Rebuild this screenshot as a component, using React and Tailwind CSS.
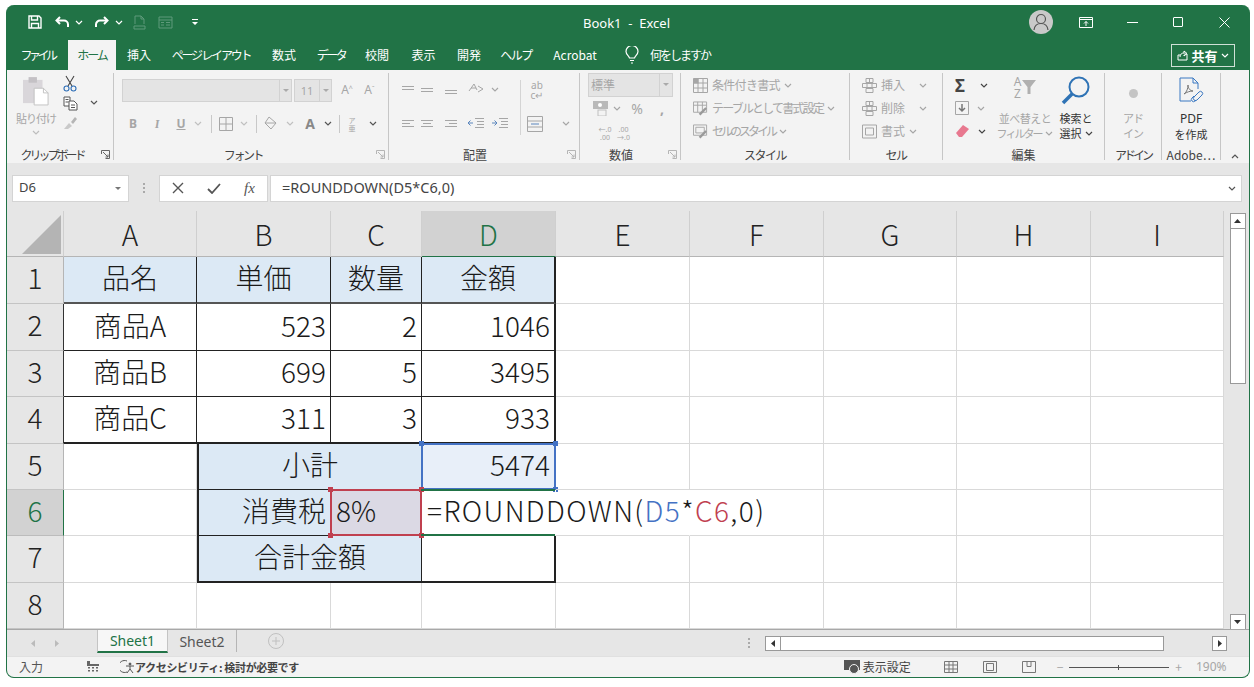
import React from "react";

const JP = "font-['Noto_Sans_CJK_JP','Noto_Sans',sans-serif]";
const UI = "font-['Noto_Sans','Noto_Sans_CJK_JP',sans-serif]";

function Chev({ c = "#a6a6a6", up = false }) {
  return (
    <svg width="8" height="5" viewBox="0 0 8 5" fill="none" stroke={c} strokeWidth="1.2" className="shrink-0">
      <path d={up ? "M1 4l3-3 3 3" : "M1 1l3 3 3-3"} />
    </svg>
  );
}
function Slot({ w, children }) {
  return <div className={`${w} flex items-center justify-center shrink-0 h-full`}>{children}</div>;
}
function VSep() {
  return <div className="w-px h-[18px] bg-[#c8c8c8]" />;
}
function Launcher({ dark }) {
  const c = dark ? "#666" : "#b5b5b5";
  return (
    <svg width="9" height="9" viewBox="0 0 9 9" fill="none" stroke={c} strokeWidth="1">
      <path d="M.5 4V.5H8.5V8.5H4.5" />
      <path d="M2 2l5 5M7 4.5V7H4.5" />
    </svg>
  );
}
function Lines({ v = [0, 3, 6], widths = [12, 12, 12], align = "c", c = "#a6a6a6" }) {
  return (
    <svg width="14" height="10" viewBox="0 0 14 10" stroke={c} strokeWidth="1">
      {v.map((y, i) => {
        const w = widths[i];
        const x = align === "l" ? 1 : align === "r" ? 13 - w : 7 - w / 2;
        return <path key={i} d={`M${x} ${y + 1.5}h${w}`} />;
      })}
    </svg>
  );
}
function Group({ w, label, dark = true, launcher, lx = "", children, sep = true }) {
  return (
    <div className={`${w} h-full shrink-0 flex`}>
      <div className="flex-1 min-w-0 flex flex-col">
        <div className="h-[77px] pt-[2px]">{children}</div>
        <div className="h-[16px] relative flex items-center justify-center">
          <span className={`${JP} text-[12px] leading-none text-[#444] whitespace-nowrap ${lx}`}>{label}</span>
          {launcher && (
            <span className="absolute right-[3px] top-[3px]">
              <Launcher dark={dark} />
            </span>
          )}
        </div>
      </div>
      {sep && <div className="w-px h-[87px] mt-[3px] bg-[#c6c6c6]" />}
    </div>
  );
}

function TitleBar() {
  const G = "#ffffff";
  return (
    <div className="h-[35px] flex items-center text-white relative">
      <Slot w="w-[14px]" />
      <Slot w="w-[28px]">
        <svg width="14" height="14" viewBox="0 0 14 14" fill="none" stroke={G} strokeWidth="1.4">
          <path d="M1 1h10l2 2v10H1z" />
          <path d="M3.5 1v4h6V1M3.5 13V8.5h7V13" />
        </svg>
      </Slot>
      <Slot w="w-[28px]">
        <svg width="16" height="12" viewBox="0 0 16 12" fill="none" stroke={G} strokeWidth="2">
          <path d="M5 1L1.5 4.5 5 8" />
          <path d="M2 4.5h7a4 4 0 0 1 4 4V11" />
        </svg>
      </Slot>
      <Slot w="w-[4px]"><Chev c="#fff" /></Slot>
      <Slot w="w-[4px]" />
      <Slot w="w-[32px]">
        <svg width="16" height="12" viewBox="0 0 16 12" fill="none" stroke={G} strokeWidth="2">
          <path d="M11 1l3.5 3.5L11 8" />
          <path d="M14 4.5H7a4 4 0 0 0-4 4V11" />
        </svg>
      </Slot>
      <Slot w="w-[4px]"><Chev c="#fff" /></Slot>
      <Slot w="w-[9px]" />
      <Slot w="w-[18px]">
        <svg width="13" height="15" viewBox="0 0 13 15" fill="none" stroke="#5f9a7b" strokeWidth="1">
          <path d="M2 9V1h6l3 3v5M8 1v3h3M1 11h11v3H1z" />
        </svg>
      </Slot>
      <Slot w="w-[4px]" />
      <Slot w="w-[26px]">
        <svg width="15" height="13" viewBox="0 0 15 13" fill="none" stroke="#5f9a7b" strokeWidth="1">
          <path d="M1 1h13v11H1zM1 4h13M3 6.5h3M8 6.5h4M3 9h3M8 9h4" />
        </svg>
      </Slot>
      <Slot w="w-[6px]" />
      <Slot w="w-[22px]">
        <svg width="6" height="6" viewBox="0 0 6 6" fill="#fff">
          <path d="M0 0h6v1H0zM0 3h6L3 6z" />
        </svg>
      </Slot>
      <div className="flex-1 pl-[377px] flex pt-[2px]">
        <span className={`${UI} text-[13px] whitespace-pre`}>{"Book1  -  Excel"}</span>
      </div>
      <div className="w-[24px] h-[24px] rounded-full bg-[#c9c9c9] flex items-center justify-center mr-[10px]">
        <svg width="16" height="18" viewBox="0 0 16 18" fill="none" stroke="#555" strokeWidth="1.2">
          <circle cx="8" cy="6" r="4.5" />
          <path d="M1 17c.5-4 3-6.500 7-6.500S14.500 13 15 17" />
        </svg>
      </div>
      <Slot w="w-[46px]">
        <svg width="14" height="11" viewBox="0 0 14 11" fill="none" stroke="#fff" strokeWidth="1">
          <path d="M.5.500h13v10H.500zM.5 2.500h13" />
          <path d="M7 9V4.500M5 6.500l2-2 2 2" />
        </svg>
      </Slot>
      <Slot w="w-[46px]"><div className="w-[11px] h-px bg-white" /></Slot>
      <Slot w="w-[46px]"><div className="w-[10px] h-[10px] border border-white rounded-[1px]" /></Slot>
      <Slot w="w-[46px]">
        <svg width="11" height="11" viewBox="0 0 11 11" stroke="#fff" strokeWidth="1"><path d="M.5.500l10 10M10.500.500l-10 10" /></svg>
      </Slot>
      <div className="w-[2px] shrink-0" />
    </div>
  );
}

function TabsRow() {
  const tabs = [
    ["ファイル", "w-[61px] tracking-[-3.5px]"],
    ["ホーム", "w-[48px] tracking-[-2px]", true],
    ["挿入", "w-[46px]"],
    ["ページ レイアウト", "w-[98px] tracking-[-2.2px]"],
    ["数式", "w-[48px]"],
    ["データ", "w-[46px] tracking-[-2.5px]"],
    ["校閲", "w-[46px]"],
    ["表示", "w-[47px]"],
    ["開発", "w-[44px]"],
    ["ヘルプ", "w-[50px] tracking-[-1.5px]"],
    ["Acrobat", "w-[68px]"],
  ];
  return (
    <div className={`h-[30px] flex items-stretch text-white ${JP} text-[12px]`}>
      {tabs.map(([t, w, act]) => (
        <div key={t} className={`${w} shrink-0 flex items-center justify-center whitespace-nowrap ${act ? "bg-[#f3f3f3] text-[#217346]" : ""}`}>
          {t}
        </div>
      ))}
      <div className="flex items-center pl-[16px] gap-[11px]">
        <svg width="14" height="18" viewBox="0 0 14 18" fill="none" stroke="#fff" strokeWidth="1.200">
          <path d="M4.500 12C4 10 1 8.500 1 5.500a6 6 0 0 1 12 0C13 8.500 10 10 9.500 12zM5 14.500h4M6 17h2" />
        </svg>
        <span className="whitespace-nowrap tracking-[-2px]">何をしますか</span>
      </div>
      <div className="flex-1" />
      <div className="self-start mt-[4px] mr-[14px] w-[64px] h-[23px] border border-[#cfe0d6] flex items-center justify-center gap-[3px]">
        <svg width="11" height="11" viewBox="0 0 11 11" fill="none" stroke="#fff" strokeWidth="1">
          <path d="M1 5v5h9V4H7M1 5l2-0M3 7c0-3 2-4 4-4V1l3 2.500L7 6V5" />
        </svg>
        <span className="font-bold text-[13px] leading-none">共有</span>
        <Chev c="#fff" />
      </div>
    </div>
  );
}

const GREY = "text-[#a6a6a6]";

function Clipboard() {
  return (
    <div className="flex h-full pl-[6px]">
      <div className="w-[46px] flex flex-col items-center pt-[4px]">
        <svg width="26" height="31" viewBox="0 0 28 31">
          <rect x="0" y="3" width="21" height="25" fill="#d9d6da" />
          <rect x="6" y="0" width="9" height="6" fill="#c4c1c5" />
          <path d="M12 12h10l5 5v13H12z" fill="#fff" stroke="#c0c0c0" />
          <path d="M22 12v5h5" fill="none" stroke="#c0c0c0" />
        </svg>
        <span className={`${JP} text-[11px] leading-none mt-[6px] tracking-[-1px] ${GREY} whitespace-nowrap`}>貼り付け</span>
        <div className="mt-[6px]"><Chev c="#bdbdbd" /></div>
      </div>
      <div className="flex flex-col items-center w-[22px] pt-[3px] gap-[4px]">
        <svg width="14" height="17" viewBox="0 0 14 17" fill="none" stroke="#444" strokeWidth="1.100">
          <path d="M3 1l6 10M11 1L5 11" />
          <circle cx="3.500" cy="13.500" r="2.500" stroke="#2f6fb7" />
          <circle cx="10.500" cy="13.500" r="2.500" stroke="#2f6fb7" />
        </svg>
        <svg width="15" height="15" viewBox="0 0 15 15" fill="#fff" stroke="#555" strokeWidth="1">
          <path d="M1 1h6v9H1zM2.500 3.500h3M2.500 6h3" />
          <path d="M6 5h5l3 3v6H6zM8 9h4M8 11.500h4" />
        </svg>
        <svg width="15" height="15" viewBox="0 0 15 15">
          <path d="M1 14l5-6 3 3-4 3z" fill="#c9c9c9" />
          <path d="M8 7l4-5 2 2-4 5z" fill="#b5b5b5" />
        </svg>
      </div>
      <div className="pt-[28px] pl-[9px]"><Chev c="#555" /></div>
    </div>
  );
}

function Font() {
  return (
    <div className="flex flex-col h-full pl-[8px]">
      <div className="h-[23px] mt-[7px] flex items-stretch">
        <div className="w-[170px] bg-[#e4e4e4] border border-[#d2d2d2] flex justify-end">
          <div className="w-[12px] border-l border-[#d2d2d2] flex items-center justify-center text-[#bbb]">
            <svg width="6" height="3" viewBox="0 0 6 3" fill="#aaa"><path d="M0 0h6L3 3z" /></svg>
          </div>
        </div>
        <div className="ml-[2px] w-[38px] bg-[#e4e4e4] border border-[#d2d2d2] flex">
          <span className={`${UI} flex-1 text-center text-[11px] leading-[21px] ${GREY}`}>11</span>
          <div className="w-[12px] border-l border-[#d2d2d2] flex items-center justify-center">
            <svg width="6" height="3" viewBox="0 0 6 3" fill="#aaa"><path d="M0 0h6L3 3z" /></svg>
          </div>
        </div>
        <div className={`w-[4px]`} />
        <Slot w="w-[22px]"><span className={`${UI} text-[12px] ${GREY}`}>A<sup className="text-[7px]">^</sup></span></Slot>
        <Slot w="w-[23px]"><span className={`${UI} text-[12px] ${GREY}`}>A<sup className="text-[7px]">ˇ</sup></span></Slot>
      </div>
      <div className={`h-[20px] mt-[12px] flex items-center ${UI} text-[12px] ${GREY}`}>
        <Slot w="w-[22px]"><b>B</b></Slot>
        <Slot w="w-[26px]"><b className="italic font-serif">I</b></Slot>
        <Slot w="w-[22px]"><b className="underline">U</b></Slot>
        <Slot w="w-[12px]"><Chev c="#c0c0c0" /></Slot>
        <Slot w="w-[14px]"><VSep /></Slot>
        <Slot w="w-[16px]">
          <svg width="14" height="14" viewBox="0 0 14 14" fill="none" stroke="#a6a6a6"><path d="M.5.500h13v13H.500zM7 .5v13M.5 7h13" /></svg>
        </Slot>
        <Slot w="w-[20px]"><Chev c="#c0c0c0" /></Slot>
        <Slot w="w-[4px]"><VSep /></Slot>
        <Slot w="w-[26px]">
          <svg width="15" height="15" viewBox="0 0 15 15" fill="none" stroke="#a6a6a6"><path d="M5 1l7 6-5 6-6-6zM1 7h11" /></svg>
        </Slot>
        <Slot w="w-[12px]"><Chev c="#c0c0c0" /></Slot>
        <Slot w="w-[28px]"><b className="text-[14px] text-[#888]">A</b></Slot>
        <Slot w="w-[8px]"><Chev c="#555" /></Slot>
        <Slot w="w-[14px]"><VSep /></Slot>
        <Slot w="w-[12px]"><span className={`${JP} text-[7px] leading-[8px] text-center`}>ア<br />亜</span></Slot>
        <Slot w="w-[30px]"><Chev c="#555" /></Slot>
      </div>
    </div>
  );
}

function Align() {
  return (
    <div className="flex h-full">
      <div className="flex flex-col h-full pl-[12px] w-[170px] shrink-0">
        <div className="h-[22px] mt-[7px] flex items-center">
          <Slot w="w-[14px]"><Lines v={[0, 3]} /></Slot>
          <Slot w="w-[24px]"><Lines v={[2, 5]} /></Slot>
          <Slot w="w-[24px]"><Lines v={[4, 7]} /></Slot>
          <Slot w="w-[24px]">
            <svg width="17" height="15" viewBox="0 0 17 15" fill="none" stroke="#a6a6a6"><path d="M2 9l5-7 3 6M4 6h5M11 4l5 3-5 3" /></svg>
          </Slot>
          <Slot w="w-[16px]"><Chev /></Slot>
          <Slot w="w-[17px]" />
          <Slot w="w-[34px]">
            <span className={`${UI} text-[10px] leading-[10px] text-center ${GREY}`}>ab<br />c↵</span>
          </Slot>
        </div>
        <div className="h-[20px] mt-[13px] flex items-center">
          <Slot w="w-[14px]"><Lines align="l" widths={[12, 8, 12]} /></Slot>
          <Slot w="w-[24px]"><Lines widths={[12, 8, 12]} /></Slot>
          <Slot w="w-[24px]"><Lines align="r" widths={[12, 8, 12]} /></Slot>
          <Slot w="w-[25px]">
            <svg width="16" height="11" viewBox="0 0 16 11" fill="none" stroke="#a6a6a6"><path d="M7 .5h9M9 3.500h7M9 6.500h7M7 9.500h9" /><path d="M5 5H0M2.500 2.500L0 5l2.500 2.500" stroke="#5b86bd" /></svg>
          </Slot>
          <Slot w="w-[24px]">
            <svg width="16" height="11" viewBox="0 0 16 11" fill="none" stroke="#a6a6a6"><path d="M7 .5h9M9 3.500h7M9 6.500h7M7 9.500h9" /><path d="M0 5h5M2.500 2.500L5 5 2.500 7.500" stroke="#5b86bd" /></svg>
          </Slot>
          <Slot w="w-[46px]">
            <svg width="16" height="16" viewBox="0 0 16 16" fill="none" stroke="#a6a6a6"><path d="M.5.500h15v15H.500zM.5 5h15M.5 11h15" /><path d="M4 8h8" stroke="#5b86bd" /></svg>
          </Slot>
          <Slot w="w-[4px]" />
          <Slot w="w-[8px]"><Chev /></Slot>
        </div>
      </div>
    </div>
  );
}

function NumberG() {
  return (
    <div className="flex flex-col h-full pl-[8px]">
      <div className="w-[85px] h-[24px] mt-[1px] bg-[#e4e4e4] border border-[#d2d2d2] flex">
        <span className={`${JP} flex-1 text-[12px] leading-[22px] pl-[2px] ${GREY}`}>標準</span>
        <div className="w-[13px] border-l border-[#d2d2d2] flex items-center justify-center">
          <svg width="6" height="3" viewBox="0 0 6 3" fill="#aaa"><path d="M0 0h6L3 3z" /></svg>
        </div>
      </div>
      <div className="h-[22px] mt-[1px] flex items-center">
        <Slot w="w-[24px]">
          <svg width="17" height="15" viewBox="0 0 17 15"><rect x="1" y="0" width="15" height="8" fill="#b9b9b9" /><circle cx="8" cy="4" r="2" fill="#fff" /><rect x="6" y="9" width="8" height="6" fill="none" stroke="#c0c0c0" /></svg>
        </Slot>
        <Slot w="w-[10px]"><Chev /></Slot>
        <Slot w="w-[30px]"><span className={`${UI} text-[14px] ${GREY}`}>%</span></Slot>
        <Slot w="w-[20px]"><span className={`${UI} font-bold text-[14px] leading-[8px] ${GREY}`}>,</span></Slot>
      </div>
      <div className={`h-[22px] mt-[3px] flex items-center ${UI} text-[7px] leading-[8px] ${GREY}`}>
        <Slot w="w-[34px]"><span className="text-center">←.0<br />.00</span></Slot>
        <span className="text-center -ml-[5px]">.00<br />→.0</span>
      </div>
    </div>
  );
}

function RowItem({ icon, text, chev, gap = "ml-[4px]", end, tr = "" }) {
  return (
    <div className="h-[23px] flex items-center">
      <div className="w-[15px] flex justify-center shrink-0">{icon}</div>
      <span className={`${JP} ${gap} text-[12px] leading-none ${GREY} whitespace-nowrap ${tr}`}>{text}</span>
      {chev && <span className={end || "ml-[4px]"}><Chev /></span>}
    </div>
  );
}
const GridIco = (
  <svg width="15" height="15" viewBox="0 0 15 15" fill="none" stroke="#a6a6a6">
    <path d="M.5.500h14v14H.500zM.5 5h14M.5 10h14M5 .5v14M10 .5v14" />
    <rect x="1" y="1" width="4" height="4" fill="#a6a6a6" />
  </svg>
);

function Styles() {
  return (
    <div className="flex flex-col h-full pl-[12px] pt-[2px]">
      <RowItem icon={GridIco} text="条件付き書式" chev tr="tracking-[-0.7px]" />
      <RowItem
        icon={<svg width="16" height="15" viewBox="0 0 16 15" fill="none" stroke="#a6a6a6"><path d="M.5.500h14v11H.500zM.5 4h14M5 .5v11M10 .5v11" /><path d="M7 14l7-7" strokeWidth="2.500" stroke="#9a9a9a" /></svg>}
        text="テーブルとして書式設定"
        tr="tracking-[-1.8px]"
        chev
      />
      <RowItem
        icon={<svg width="16" height="15" viewBox="0 0 16 15" fill="none" stroke="#a6a6a6"><path d="M.5.500h14v11H.500zM3 3h9v6H3z" /><path d="M7 14l7-7" strokeWidth="2.500" stroke="#9a9a9a" /></svg>}
        text="セルのスタイル"
        tr="tracking-[-3px]"
        chev
      />
    </div>
  );
}

function Cells() {
  const ico = (
    <svg width="15" height="15" viewBox="0 0 15 15" fill="none" stroke="#a6a6a6">
      <path d="M4 .5h7v4H4zM.5 5.500h14v4H.500zM4 10.500h7v4H4zM7.500 .5v4M5 5.500v4M10 5.500v4" />
    </svg>
  );
  return (
    <div className="flex flex-col h-full pl-[12px] pt-[2px]">
      <RowItem icon={ico} text="挿入" chev end="ml-[14px]" />
      <RowItem icon={ico} text="削除" chev end="ml-[14px]" />
      <RowItem
        icon={<svg width="15" height="15" viewBox="0 0 15 15" fill="none" stroke="#a6a6a6"><path d="M.5 1h14v13H.500zM3.500 4h8v7h-8z" /></svg>}
        text="書式"
        chev
      />
    </div>
  );
}

function Edit() {
  return (
    <div className="flex h-full">
      <div className="w-[50px] pl-[12px] flex flex-col pt-[2px]">
        <div className="h-[23px] flex items-center gap-[15px]">
          <span className={`${UI} text-[17px] font-bold leading-none text-[#444]`}>Σ</span>
          <Chev c="#444" />
        </div>
        <div className="h-[23px] flex items-center gap-[8px]">
          <svg width="14" height="14" viewBox="0 0 14 14" fill="none" stroke="#a6a6a6"><path d="M.5.500h13v13H.500z" /><path d="M7 3v7M4 7l3 3 3-3" stroke="#777" strokeWidth="1.500" /></svg>
          <Chev />
        </div>
        <div className="h-[23px] flex items-center gap-[8px]">
          <svg width="15" height="14" viewBox="0 0 15 14"><path d="M1 9l7-8 6 4-7 8H4z" fill="#e8788f" /></svg>
          <Chev c="#444" />
        </div>
      </div>
      <div className="w-[56px] flex flex-col items-center ml-[4px] pt-[4px] shrink-0">
        <div className="h-[28px] flex items-start gap-[1px]">
          <span className={`${UI} text-[12px] leading-[12px] text-center ${GREY}`}>A<br />Z</span>
          <svg width="14" height="14" viewBox="0 0 14 14" className="mt-[4px]"><path d="M0 0h14L8.500 7v7h-3V7z" fill="#b0b0b0" /></svg>
        </div>
        <span className={`${JP} text-[11px] leading-none mt-[9px] tracking-[-0.5px] ${GREY} whitespace-nowrap`}>並べ替えと</span>
        <span className={`${JP} text-[11px] leading-none mt-[4px] ${GREY} whitespace-nowrap flex items-center gap-[4px]`}><span className="tracking-[-2px]">フィルター</span><Chev /></span>
      </div>
      <div className="w-[46px] flex flex-col items-center pt-[4px] shrink-0">
        <div className="h-[28px]">
          <svg width="30" height="30" viewBox="0 0 30 30" fill="none">
            <circle cx="18" cy="11" r="9.500" stroke="#2f73b5" strokeWidth="2" />
            <path d="M11 18L2 27" stroke="#2f73b5" strokeWidth="3.500" />
          </svg>
        </div>
        <span className={`${JP} text-[11px] leading-none mt-[9px] text-[#333] whitespace-nowrap`}>検索と</span>
        <span className={`${JP} text-[11px] leading-none mt-[4px] text-[#333] whitespace-nowrap flex items-center gap-[3px]`}>選択 <Chev c="#444" /></span>
      </div>
    </div>
  );
}

function AddIn() {
  return (
    <div className="flex flex-col items-center h-full">
      <div className="h-[36px] flex items-center justify-center pt-[7px]">
        <div className="w-[9px] h-[9px] rounded-full bg-[#c4c4c4]" />
      </div>
      <span className={`${JP} text-[11px] leading-none mt-[5px] tracking-[-1px] ${GREY}`}>アド</span>
      <span className={`${JP} text-[11px] leading-none mt-[4px] tracking-[-1px] ${GREY}`}>イン</span>
    </div>
  );
}

function Pdf() {
  return (
    <div className="flex flex-col items-center h-full pt-[5px]">
      <div className="h-[31px]">
        <svg width="28" height="28" viewBox="0 0 28 28" fill="none" stroke="#3b78c2" strokeWidth="1">
          <path d="M14 24H3V1h13l5 5v6M16 1v5h5" />
          <path d="M7 17c3-2 4-6 4-9 0 3 2 6 5 6-3 0-6 1-9 3z" stroke="#777" />
          <path d="M17 20l5-5a2 2 0 0 1 3 3l-5 5a2 2 0 0 1-3-3z" />
          <path d="M19 23l-1 1a2 2 0 0 1-3-3l2-2" />
        </svg>
      </div>
      <span className={`${UI} text-[12px] leading-none text-[#333] mt-[5px]`}>PDF</span>
      <span className={`${JP} text-[11px] leading-none text-[#333] mt-[4px]`}>を作成</span>
    </div>
  );
}

function Ribbon() {
  return (
    <div className="h-[93px] bg-[#f3f3f3] flex">
      <Group w="w-[107px]" label="クリップボード" lx="tracking-[-3px] mr-[16px]" launcher><Clipboard /></Group>
      <Group w="w-[275px]" label="フォント" lx="tracking-[-2.4px] mr-[16px]" launcher dark={false}><Font /></Group>
      <Group w="w-[191px]" label="配置" lx="mr-[18px]" launcher dark={false}>
        <div className="relative h-full">
          <Align />
          <div className="absolute left-[131px] top-[8px] w-px h-[55px] bg-[#d4d4d4]" />
        </div>
      </Group>
      <Group w="w-[101px]" label="数値" lx="mr-[18px]" launcher dark={false}><NumberG /></Group>
      <Group w="w-[169px]" label="スタイル" lx="tracking-[-1.5px]"><Styles /></Group>
      <Group w="w-[93px]" label="セル" lx="tracking-[-1.5px]"><Cells /></Group>
      <Group w="w-[162px]" label="編集"><Edit /></Group>
      <Group w="w-[57px]" label="アドイン" lx="tracking-[-3px]"><AddIn /></Group>
      <Group w="w-[59px]" label="Adobe⋯"><Pdf /></Group>
      <div className="flex-1 flex items-end justify-center pb-[4px]"><Chev c="#555" up /></div>
    </div>
  );
}

function FormulaBar() {
  return (
    <div className="h-[49px] bg-[#e6e6e6] flex pt-[12px] pl-[5px]">
      <div className="w-[117px] h-[27px] bg-white border border-[#d4d4d4] flex items-center justify-between px-[6px]">
        <span className={`${UI} text-[13px] text-[#444]`}>D6</span>
        <svg width="6" height="3" viewBox="0 0 6 3" fill="#777" className="mr-[1px]"><path d="M0 0h6L3 3z" /></svg>
      </div>
      <div className="w-[30px] flex items-center justify-center h-[27px]">
        <div className="flex flex-col gap-[2px]">
          <div className="w-[2px] h-[2px] bg-[#aaa]" /><div className="w-[2px] h-[2px] bg-[#aaa]" /><div className="w-[2px] h-[2px] bg-[#aaa]" />
        </div>
      </div>
      <div className="w-[109px] h-[27px] bg-white border border-[#d4d4d4] flex items-center">
        <Slot w="w-[35px]">
          <svg width="12" height="12" viewBox="0 0 12 12" stroke="#555" strokeWidth="1.400"><path d="M1 1l10 10M11 1L1 11" /></svg>
        </Slot>
        <Slot w="w-[37px]">
          <svg width="14" height="11" viewBox="0 0 14 11" fill="none" stroke="#555" strokeWidth="1.800"><path d="M1 6l4 4 8-9" /></svg>
        </Slot>
        <Slot w="w-[35px]"><span className="font-['Liberation_Serif',serif] italic text-[15px] text-[#555]">fx</span></Slot>
      </div>
      <div className="ml-[2px] w-[972px] h-[27px] bg-white border border-[#d4d4d4] flex items-center justify-between pl-[11px] pr-[5px]">
        <span className={`${UI} text-[14.5px] text-[#444]`}>=ROUNDDOWN(D5*C6,0)</span>
        <Chev c="#555" />
      </div>
    </div>
  );
}

const LINE = "border-[#d9d9d9]";
function C({ cls = "", children, span }) {
  return (
    <div className={`border-r border-b ${LINE} relative flex items-center pb-[5px] ${JP} font-light text-[28px] leading-none text-[#1a1a1a] whitespace-nowrap ${span ? "col-span-2" : ""} ${cls}`}>
      {children}
    </div>
  );
}
function ColH({ t, sel }) {
  return (
    <div className={`border-r border-b border-r-[#cfcfcf] flex items-center justify-center ${JP} font-light text-[28px] leading-none ${sel ? "bg-[#d2d2d2] text-[#217346] border-b-[#217346]" : "bg-[#e6e6e6] text-[#222] border-b-[#b5b5b5]"}`}>
      {t}
    </div>
  );
}
function RowH({ t, sel, dark }) {
  return (
    <div className={`border-b border-r flex items-center justify-center pb-[6px] ${JP} font-light text-[28px] leading-none ${sel ? "bg-[#d2d2d2] text-[#217346] border-r-[#217346] border-b-[#bcbcbc]" : `bg-[#e6e6e6] text-[#222] border-b-[#c4c4c4] ${dark ? "border-r-[#333]" : "border-r-[#b5b5b5]"}`}`}>
      {t}
    </div>
  );
}
function Handle({ cls, color }) {
  return <span className={`absolute w-[5px] h-[5px] ${color} ${cls}`} />;
}

const FILL = "bg-[#dce9f5]";
const BR = "border-r-[#222]";
const BB = "border-b-[#222]";

function Sheet() {
  const empties = (n) => Array.from({ length: n }, (_, i) => <C key={i} />);
  const row = (label, a, b, c, d) => (
    <React.Fragment key={label}>
      <RowH t={label} dark />
      <C cls={`justify-center ${BR} ${label === "4" ? "border-b-2" : ""} ${BB}`}>{a}</C>
      <C cls={`justify-end pr-[4px] ${BR} ${BB} ${label === "4" ? "border-b-2" : ""}`}>{b}</C>
      <C cls={`justify-end pr-[4px] ${BR} ${BB} ${label === "4" ? "border-b-2" : ""}`}>{c}</C>
      <C cls={`justify-end pr-[4px] border-r-2 ${BR} ${BB} ${label === "4" ? "border-b-2" : ""}`}>{d}</C>
      {empties(5)}
    </React.Fragment>
  );
  return (
    <div className="grid grid-cols-[57px_133px_134px_91px_134px_134px_134px_133px_134px_133px] grid-rows-[46px_47px_47px_46px_47px_46px_46px_47px_46px] bg-white w-[1217px] h-[418px] overflow-hidden">
      <div className="bg-[#e6e6e6] border-r border-b border-r-[#cfcfcf] border-b-[#b5b5b5] flex items-end justify-end p-[2px]">
        <svg width="39" height="39" viewBox="0 0 39 39"><path d="M39 0v39H0z" fill="#b4b4b4" /></svg>
      </div>
      <ColH t="A" /><ColH t="B" /><ColH t="C" /><ColH t="D" sel />
      <ColH t="E" /><ColH t="F" /><ColH t="G" /><ColH t="H" /><ColH t="I" />

      <RowH t="1" />
      <C cls={`${FILL} justify-center ${BR} border-b-2 border-b-[#555]`}>品名</C>
      <C cls={`${FILL} justify-center ${BR} border-b-2 border-b-[#555]`}>単価</C>
      <C cls={`${FILL} justify-center ${BR} border-b-2 border-b-[#555]`}>数量</C>
      <C cls={`${FILL} justify-center border-r-2 ${BR} border-b-2 border-b-[#555]`}>金額</C>
      {empties(5)}

      {row("2", "商品A", "523", "2", "1046")}
      {row("3", "商品B", "699", "5", "3495")}
      {row("4", "商品C", "311", "3", "933")}

      <RowH t="5" />
      <C />
      <C span cls={`${FILL} justify-center ${BR} ${BB} border-l-2 border-l-[#222]`}>小計</C>
      <C cls="bg-[#e8eff9] justify-end pr-[5px]">
        5474
        <span className="absolute -inset-px border-2 border-[#4472c4] pointer-events-none" />
        <Handle cls="-left-[3px] -top-[3px]" color="bg-[#4472c4]" />
        <Handle cls="-right-[3px] -top-[3px]" color="bg-[#4472c4]" />
        <Handle cls="-right-[3px] -bottom-[3px]" color="bg-[#4472c4]" />
      </C>
      {empties(5)}

      <RowH t="6" sel />
      <C />
      <C cls={`${FILL} justify-end pr-[4px] ${BR} ${BB} border-l-2 border-l-[#222]`}>消費税</C>
      <C cls="bg-[#dbd9e4] pl-[5px] z-10">
        8%
        <span className="absolute -inset-px border-2 border-[#c0404f] pointer-events-none" />
        <Handle cls="-left-[3px] -top-[3px]" color="bg-[#c0404f]" />
        <Handle cls="-left-[3px] -bottom-[3px]" color="bg-[#c0404f]" />
        <Handle cls="-right-[3px] -top-[3px]" color="bg-[#c0404f]" />
        <Handle cls="-right-[3px] -bottom-[3px]" color="bg-[#c0404f]" />
      </C>
      <C cls="border-r-white pl-[5px] z-10">
        <span className="absolute -left-px -top-px -bottom-px right-0 border-t-2 border-b-2 border-[#217346] pointer-events-none" />
        <span className="tracking-[1.4px]">=ROUNDDOWN(<span className="text-[#4472c4]">D5</span>*<span className="text-[#c0404f]">C6</span>,0)</span>
      </C>
      <C cls="border-r-white" />
      {empties(4)}

      <RowH t="7" />
      <C />
      <C span cls={`${FILL} justify-center ${BR} border-l-2 border-l-[#222] border-b-2 ${BB}`}>合計金額</C>
      <C cls={`border-r-2 ${BR} border-b-2 ${BB}`} />
      {empties(5)}

      <RowH t="8" />
      {empties(9)}
    </div>
  );
}

function VScroll() {
  return (
    <div className="flex-1 bg-[#e6e6e6] flex flex-col items-center pt-[2px] pl-[2px]">
      <div className="w-[16px] h-[16px] bg-white border border-[#999] flex items-center justify-center">
        <svg width="7" height="4" viewBox="0 0 7 4" fill="#333"><path d="M0 4h7L3.500 0z" /></svg>
      </div>
      <div className="w-[16px] h-[155px] bg-white border-x border-b border-[#999]" />
      <div className="flex-1" />
      <div className="w-[16px] h-[16px] bg-white border border-[#999] flex items-center justify-center mb-[-1px]">
        <svg width="7" height="4" viewBox="0 0 7 4" fill="#333"><path d="M0 0h7L3.500 4z" /></svg>
      </div>
    </div>
  );
}

function TabBar() {
  return (
    <div className="h-[27px] bg-[#e6e6e6] border-t border-[#a8a8a8] flex items-start">
      <div className="w-[90px] h-full flex items-center pl-[24px] gap-[20px] shrink-0">
        <svg width="4" height="7" viewBox="0 0 4 7" fill="#bbb"><path d="M4 0v7L0 3.500z" /></svg>
        <svg width="4" height="7" viewBox="0 0 4 7" fill="#bbb"><path d="M0 0v7l4-3.500z" /></svg>
      </div>
      <div className={`w-[71px] h-[23px] bg-[#f7f7f7] border-x border-b-2 border-x-[#c4c4c4] border-b-[#217346] flex items-center justify-center ${UI} text-[14px] text-[#217346] shrink-0`}>Sheet1</div>
      <div className={`w-[69px] h-[22px] flex items-center justify-center ${UI} text-[14px] text-[#555] border-r border-[#b5b5b5] shrink-0`}>Sheet2</div>
      <div className="w-[78px] h-[22px] flex items-center justify-center shrink-0">
        <svg width="16" height="16" viewBox="0 0 16 16" fill="none" stroke="#c0c0c0"><circle cx="8" cy="8" r="7.500" /><path d="M8 4v8M4 8h8" /></svg>
      </div>
      <div className="w-[427px] shrink-0" />
      <div className="w-[14px] h-full flex flex-col items-center justify-center gap-[2px] shrink-0">
        <div className="w-[2px] h-[2px] bg-[#aaa]" /><div className="w-[2px] h-[2px] bg-[#aaa]" /><div className="w-[2px] h-[2px] bg-[#aaa]" />
      </div>
      <div className="ml-[9px] mt-[6px] w-[16px] h-[15px] bg-white border border-[#999] flex items-center justify-center shrink-0">
        <svg width="4" height="7" viewBox="0 0 4 7" fill="#333"><path d="M4 0v7L0 3.500z" /></svg>
      </div>
      <div className="mt-[6px] w-[383px] h-[15px] bg-white border-y border-r border-[#999] shrink-0" />
      <div className="w-[48px] shrink-0" />
      <div className="mt-[6px] w-[15px] h-[15px] bg-white border border-[#999] flex items-center justify-center shrink-0">
        <svg width="4" height="7" viewBox="0 0 4 7" fill="#333"><path d="M0 0v7l4-3.500z" /></svg>
      </div>
    </div>
  );
}

function StatusBar() {
  return (
    <div className={`h-[21px] bg-[#f3f3f3] border-t border-[#e0e0e0] flex items-center ${JP} text-[11px] text-[#444]`}>
      <span className="ml-[12px] w-[40px] text-[12px] text-[#555]">入力</span>
      <div className="ml-[28px] w-[12px] flex justify-center">
        <svg width="12" height="12" viewBox="0 0 12 12" fill="#666"><path d="M0 0h3v3H0zM0 3h12v2H0zM1 6h2v1.500H1zM5 6h2v1.500H5zM9 6h2v1.500H9zM1 9h2v1.500H1zM5 9h2v1.500H5zM9 9h2v1.500H9z" /></svg>
      </div>
      <div className="ml-[20px] w-[16px] flex justify-center">
        <svg width="15" height="14" viewBox="0 0 15 14" fill="none" stroke="#555"><path d="M7 1a6 6 0 1 0 0 11" /><circle cx="10" cy="4" r="1" fill="#555" /><path d="M6 6h8M10 6v3l-3 4M10 9l3 4" /></svg>
      </div>
      <span className="font-bold whitespace-nowrap text-[11px] tracking-[-0.35px]">アクセシビリティ: 検討が必要です</span>
      <div className="flex-1" />
      <div className="flex items-center gap-[1px] mr-[21px]">
        <svg width="18" height="14" viewBox="0 0 18 14"><rect x="0" y="0" width="16" height="10" fill="#555" /><circle cx="10" cy="9" r="4.500" fill="#555" stroke="#f3f3f3" /></svg>
        <span className="text-[12px] whitespace-nowrap">表示設定</span>
      </div>
      <Slot w="w-[39px]">
        <svg width="14" height="12" viewBox="0 0 14 12" fill="none" stroke="#777"><path d="M.5.500h13v11H.500zM5 .5v11M9 .5v11M.5 4h13M.5 8h13" /></svg>
      </Slot>
      <Slot w="w-[39px]">
        <svg width="14" height="12" viewBox="0 0 14 12" fill="none" stroke="#777"><path d="M.5.500h13v11H.500zM3.500 2.500h7v7h-7z" /></svg>
      </Slot>
      <Slot w="w-[39px]">
        <svg width="14" height="12" viewBox="0 0 14 12" fill="none" stroke="#777"><path d="M.5.500h13v11H.500zM5 .5v5h4v-5" /></svg>
      </Slot>
      <span className={`ml-[8px] ${GREY} text-[12px]`}>−</span>
      <div className="relative ml-[6px] w-[100px] h-px bg-[#555]">
        <span className="absolute left-[49px] -top-[2px] w-px h-[5px] bg-[#555]" />
      </div>
      <span className={`ml-[6px] ${GREY} text-[12px]`}>+</span>
      <span className={`ml-[14px] w-[53px] ${UI} text-[12px] ${GREY}`}>190%</span>
    </div>
  );
}

export default function App() {
  return (
    <div className="w-[1254px] h-[687px] bg-white pl-[6px] pt-[5px] overflow-hidden">
      <div className="w-[1244px] h-[673px] border-x border-b border-[#217346] rounded-[8px] overflow-hidden bg-[#217346] flex flex-col">
        <TitleBar />
        <TabsRow />
        <Ribbon />
        <FormulaBar />
        <div className="h-[418px] flex bg-[#e6e6e6]">
          <Sheet />
          <VScroll />
        </div>
        <TabBar />
        <StatusBar />
      </div>
    </div>
  );
}
